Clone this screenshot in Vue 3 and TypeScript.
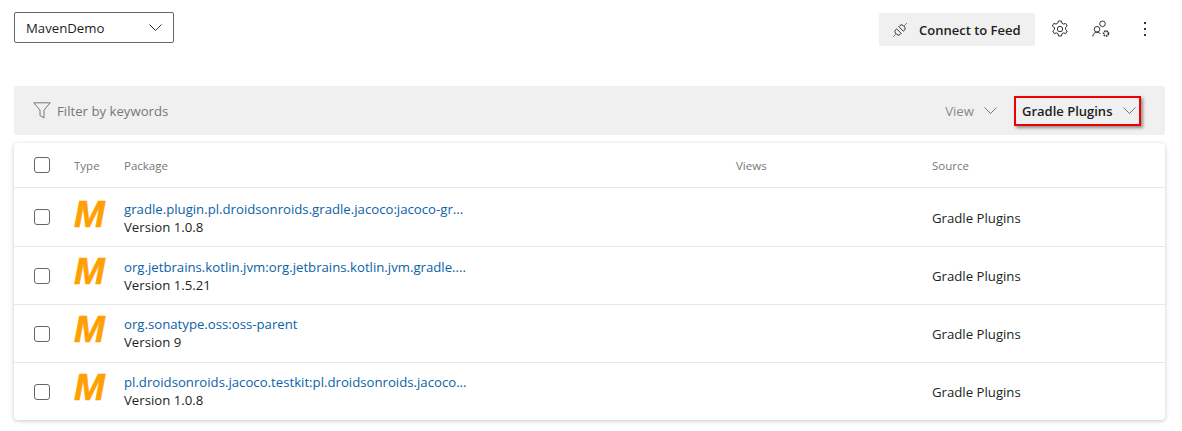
<script setup lang="ts">
  interface PackageRow {
    name: string
    version: string
    source: string
  }

  const rows: PackageRow[] = [
    { name: 'gradle.plugin.pl.droidsonroids.gradle.jacoco:jacoco-gr...', version: 'Version 1.0.8', source: 'Gradle Plugins' },
    { name: 'org.jetbrains.kotlin.jvm:org.jetbrains.kotlin.jvm.gradle....', version: 'Version 1.5.21', source: 'Gradle Plugins' },
    { name: 'org.sonatype.oss:oss-parent', version: 'Version 9', source: 'Gradle Plugins' },
    { name: 'pl.droidsonroids.jacoco.testkit:pl.droidsonroids.jacoco...', version: 'Version 1.0.8', source: 'Gradle Plugins' },
  ]
</script>

<template>
  <div class="page">
    <div class="topbar">
      <div class="feed-select">
        <span>MavenDemo</span>
        <svg class="chevron" width="13" height="7" viewBox="0 0 13 7"><path d="M.5.5l6 6 6-6" /></svg>
      </div>
      <div class="actions">
        <div class="connect-btn">
          <svg class="plug" width="16" height="16" viewBox="0 0 16 16">
            <path d="M1 15l3.2-3.2M11.8 4.2L15 1" stroke="#a9793f" />
            <path d="M4.6 6.800l4.600 4.600-.9.9a2.600 2.600 0 0 1-3.700 0l-.9-.9a2.600 2.600 0 0 1 0-3.700zM6.800 4.600l4.600 4.600.9-.9a2.600 2.600 0 0 0 0-3.700l-.9-.9a2.600 2.600 0 0 0-3.700 0z" stroke="#333" />
          </svg>
          <span>Connect to Feed</span>
        </div>
        <svg class="tool-icon gear" width="18" height="18" viewBox="0 0 18 18">
          <path d="M7.500 1h3l.5 2.300 1.500.8 2.200-.7 1.500 2.600-1.700 1.600v1.800l1.700 1.600-1.500 2.600-2.200-.7-1.500.8-.5 2.300h-3l-.5-2.300-1.500-.8-2.200.7-1.500-2.600 1.700-1.600V7.600L1.300 6l1.500-2.600 2.200.7 1.500-.8z" />
          <circle cx="9" cy="9" r="2.700" />
        </svg>
        <svg class="tool-icon people" width="18" height="18" viewBox="0 0 18 18">
          <circle cx="10.500" cy="3.800" r="2.800" />
          <circle cx="5" cy="9.300" r="2.800" />
          <path d="M.8 16.500c0-2.400 1.800-4.300 4.200-4.300 1.500 0 2.700.7 3.400 1.800" />
          <circle cx="14" cy="13.500" r="2.400" stroke-dasharray="1.400 .7" stroke-width="1.800" />
        </svg>
        <div class="dots"><i /><i /><i /></div>
      </div>
    </div>

    <div class="filter-bar">
      <svg class="funnel" width="18" height="17" viewBox="0 0 18 17"><path d="M.8.800h16.400L11 8.200V16l-4-2.500V8.200z" /></svg>
      <span class="filter-text">Filter by keywords</span>
      <div class="view-drop">
        <span>View</span>
        <svg class="chevron light" width="13" height="7" viewBox="0 0 13 7"><path d="M.5.5l6 6 6-6" /></svg>
      </div>
      <div class="source-drop">
        <span>Gradle Plugins</span>
        <svg class="chevron light" width="13" height="7" viewBox="0 0 13 7"><path d="M.5.5l6 6 6-6" /></svg>
      </div>
    </div>

    <div class="card">
      <div class="row head">
        <div class="check-cell"><span class="checkbox" /></div>
        <div>Type</div>
        <div>Package</div>
        <div>Views</div>
        <div>Source</div>
      </div>
      <div v-for="row in rows" :key="row.name" class="row item">
        <div class="check-cell"><span class="checkbox" /></div>
        <div class="maven">M</div>
        <div class="pkg">
          <div class="pkg-name">{{ row.name }}</div>
          <div class="pkg-version">{{ row.version }}</div>
        </div>
        <div />
        <div class="source">{{ row.source }}</div>
      </div>
    </div>
  </div>
</template>

<style scoped>
  .page {
    width: 1182px;
    height: 431px;
    box-sizing: border-box;
    padding: 12px 17px 0 14px;
    background: #fff;
    font-family: "Open Sans", "Noto Sans", sans-serif;
    font-size: 13.2px;
    color: #201f1e;
    overflow: hidden;
  }

  .topbar {
    display: flex;
    justify-content: space-between;
    align-items: flex-start;
    height: 74px;
  }

  .feed-select {
    width: 160px;
    height: 31px;
    box-sizing: border-box;
    border: 1px solid #666;
    border-radius: 2px;
    padding: 0 11px;
    display: flex;
    align-items: center;
    justify-content: space-between;
  }

  .chevron {
    fill: none;
    stroke: #333;
    stroke-width: 1;
  }

  .chevron.light {
    stroke: #777;
  }

  .actions {
    display: flex;
    align-items: center;
    margin-top: 1px;
    height: 33px;
  }

  .connect-btn {
    width: 156px;
    height: 33px;
    box-sizing: border-box;
    padding-left: 13px;
    background: #f0f0f0;
    border-radius: 2px;
    display: flex;
    align-items: center;
    gap: 11px;
    font-size: 13px;
    font-weight: 600;
  }

  .plug {
    fill: none;
    stroke-width: 1;
  }

  .tool-icon {
    fill: none;
    stroke: #333;
    stroke-width: 1;
    margin-bottom: 2px;
  }

  .gear {
    margin-left: 16px;
  }

  .people {
    margin-left: 23px;
  }

  .dots {
    margin-left: 34px;
    margin-right: 19px;
    margin-bottom: 2px;
    display: flex;
    flex-direction: column;
    gap: 4px;
  }

  .dots i {
    width: 2px;
    height: 2px;
    background: #333;
    display: block;
  }

  .filter-bar {
    height: 49px;
    background: #f0f0f0;
    border-radius: 2px;
    display: flex;
    align-items: center;
    padding-left: 19px;
  }

  .funnel {
    fill: none;
    stroke: #777;
    stroke-width: 1;
    margin-right: 6px;
  }

  .filter-text {
    flex: 1;
    color: #797775;
  }

  .view-drop {
    display: flex;
    align-items: center;
    gap: 10px;
    color: #8a8886;
    margin-right: 17px;
  }

  .source-drop {
    width: 127px;
    height: 30px;
    box-sizing: border-box;
    margin-right: 24px;
    padding: 0 3px 0 6px;
    border: 2px solid #f00000;
    box-shadow: 2px 2px 3px rgba(0, 0, 0, 0.4);
    display: flex;
    align-items: center;
    justify-content: space-between;
    font-size: 13px;
    font-weight: 600;
    white-space: nowrap;
  }

  .card {
    margin-top: 8px;
    background: #fff;
    border-radius: 4px;
    box-shadow: 0 1px 4px rgba(0, 0, 0, 0.22);
    overflow: hidden;
  }

  .row {
    display: grid;
    grid-template-columns: 60px 50px 612px 196px 1fr;
    align-items: center;
  }

  .head {
    height: 44px;
    font-size: 11.5px;
    font-weight: 500;
    color: #797775;
  }

  .item {
    height: 58px;
    box-sizing: border-box;
    border-top: 1px solid #e8e8e8;
  }

  .head + .item {
    height: 59px;
    padding-top: 2px;
  }

  .head + .item .check-cell {
    margin-top: -2px;
  }

  .item:nth-child(n + 4) .pkg {
    margin-bottom: 2px;
  }

  .check-cell {
    padding-left: 20px;
    display: flex;
  }

  .checkbox {
    width: 16px;
    height: 16px;
    box-sizing: border-box;
    border: 1px solid #666;
    border-radius: 3px;
  }

  .maven {
    font-family: "Liberation Sans", Arial, sans-serif;
    font-size: 37px;
    font-weight: 700;
    font-style: italic;
    line-height: 40px;
    color: #ffa000;
    -webkit-text-stroke: 0.6px #ffa000;
    padding-bottom: 7px;
  }

  .pkg {
    line-height: 18px;
  }

  .pkg-name {
    color: #0b62a8;
  }

  .source {
    color: #201f1e;
  }
</style>
